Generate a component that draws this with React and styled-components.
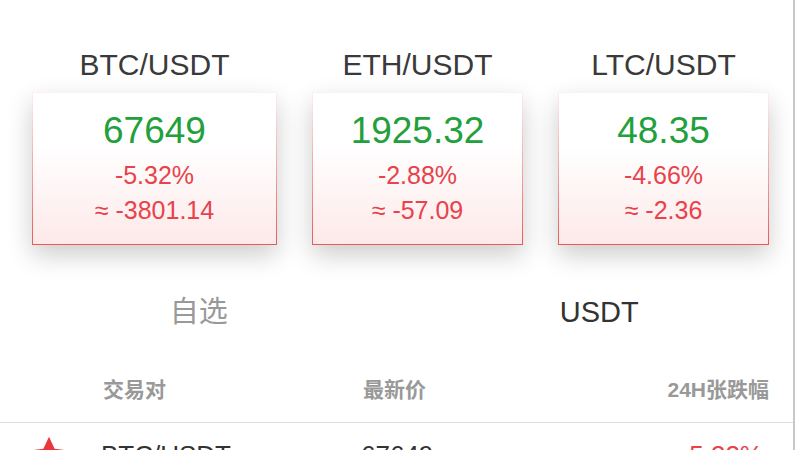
import React from "react"
import styled, { createGlobalStyle } from "styled-components"

const GlobalStyle = createGlobalStyle`
  html, body {
    margin: 0;
    padding: 0;
    background: #fff;
    overflow: hidden;
  }
  body {
    font-family: "Liberation Sans", "Noto Sans CJK SC", sans-serif;
  }
`

const Page = styled.div`
  width: 795px;
  height: 450px;
  border-right: 2px solid #c8c8c8;
  box-sizing: border-box;
  overflow: hidden;
`

const Tickers = styled.div`
  display: grid;
  grid-template-columns: 245px 211px 211px;
  column-gap: 35px;
  padding: 48px 0 0 32px;
`

const Ticker = styled.div`
  display: flex;
  flex-direction: column;
  align-items: center;
`

const Pair = styled.div`
  font-size: 30px;
  line-height: 34px;
  color: #3a3a3a;
  margin-bottom: 10px;
`

const Card = styled.div`
  align-self: stretch;
  display: flex;
  flex-direction: column;
  align-items: center;
  box-sizing: border-box;
  height: 153px;
  padding-top: 18px;
  background: linear-gradient(to bottom, #ffffff 35%, #fde9e9 100%);
  border: 1px solid;
  border-image: linear-gradient(to bottom, #fcf0f0, #e85a5a) 1;
  box-shadow: 0 10px 24px rgba(0, 0, 0, 0.2);
`

const Price = styled.div`
  font-size: 37px;
  line-height: 40px;
  color: #22a03c;
`

const Change = styled.div`
  font-size: 25px;
  line-height: 30px;
  color: #e8424a;
  margin-top: ${p => p.$gap}px;
`

const Tabs = styled.div`
  display: flex;
  margin-top: 47px;
`

const Tab = styled.div`
  flex: 1;
  text-align: center;
  font-size: 29px;
  line-height: 40px;
  color: ${p => (p.$active ? "#333" : "#999")};
  padding-left: ${p => (p.$active ? 13 : 5)}px;
`

const HeadRow = styled.div`
  display: grid;
  grid-template-columns: 260px 1fr auto;
  padding: 0 24px 0 103px;
  margin-top: 44px;
  height: 46px;
  border-bottom: 1px solid #ddd;
  font-size: 21px;
  line-height: 28px;
  font-weight: bold;
  color: #999;
`

const Row = styled.div`
  display: grid;
  grid-template-columns: 72px 260px 1fr auto;
  padding: 13px 30px 0 29px;
  font-size: 26px;
  line-height: 38px;
  color: #333;
`

const Down = styled.span`
  color: #e8424a;
`

const Star = () => (
  <svg width="40" height="38" viewBox="0 0 24 23">
    <path
      d="M12 0.5l3.4 7.2 7.9 1-5.8 5.5 1.5 7.8L12 18.1l-7 3.9 1.5-7.8L0.7 8.7l7.9-1z"
      fill="#e8383d"
    />
  </svg>
)

const tickers = [
  { pair: "BTC/USDT", price: "67649", pct: "-5.32%", diff: "≈ -3801.14" },
  { pair: "ETH/USDT", price: "1925.32", pct: "-2.88%", diff: "≈ -57.09" },
  { pair: "LTC/USDT", price: "48.35", pct: "-4.66%", diff: "≈ -2.36" },
]

const App = () => (
  <Page>
    <GlobalStyle />
    <Tickers>
      {tickers.map(t => (
        <Ticker key={t.pair}>
          <Pair>{t.pair}</Pair>
          <Card>
            <Price>{t.price}</Price>
            <Change $gap={9}>{t.pct}</Change>
            <Change $gap={5}>{t.diff}</Change>
          </Card>
        </Ticker>
      ))}
    </Tickers>

    <Tabs>
      <Tab>自选</Tab>
      <Tab $active>USDT</Tab>
    </Tabs>

    <HeadRow>
      <span>交易对</span>
      <span>最新价</span>
      <span>24H张跌幅</span>
    </HeadRow>

    <Row>
      <Star />
      <span>BTC/USDT</span>
      <span>67649</span>
      <Down>-5.32%</Down>
    </Row>
  </Page>
)

export default App
